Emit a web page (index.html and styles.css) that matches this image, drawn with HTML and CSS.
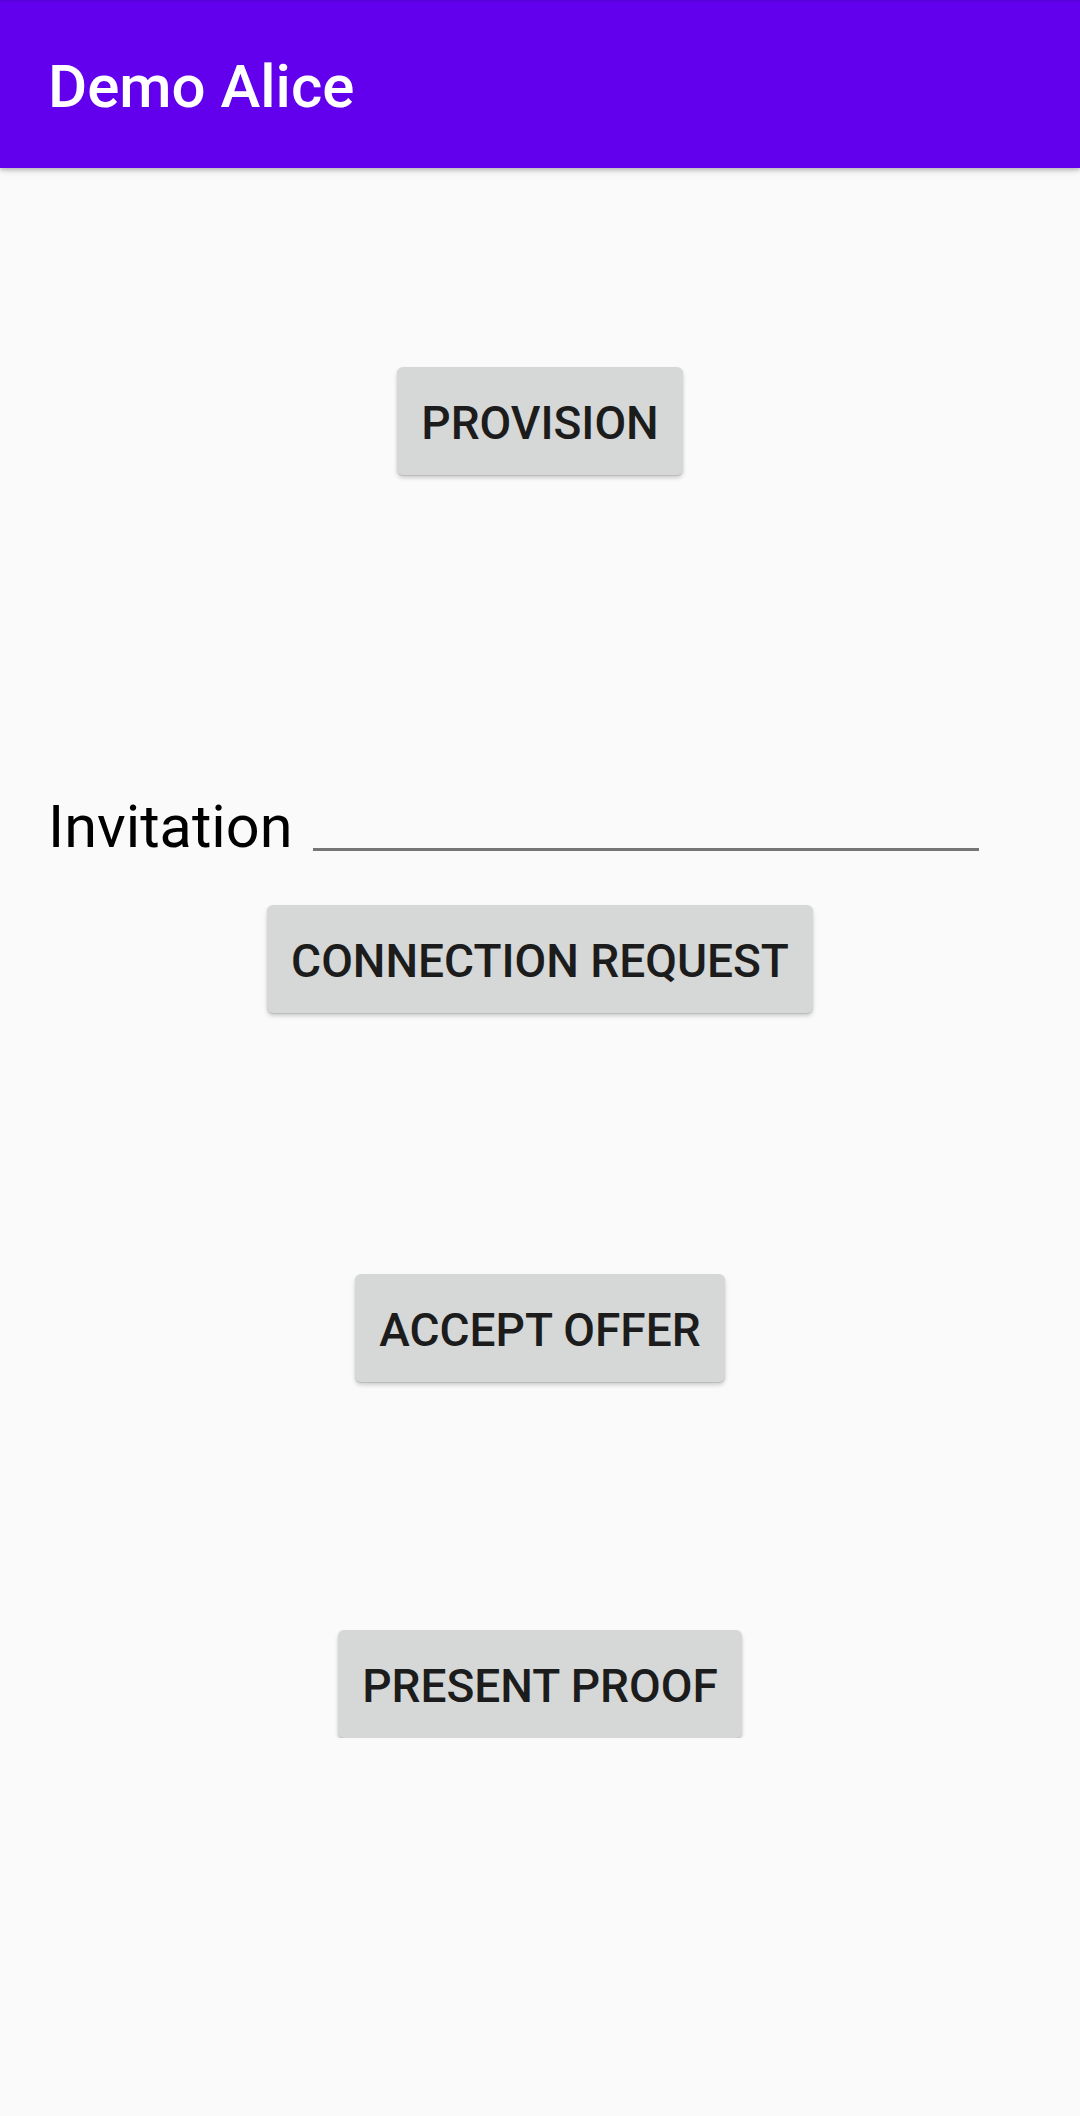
FILE: index.html
```html
<!DOCTYPE html>
<html>
<head>
<meta charset="utf-8">
<link rel="stylesheet" href="styles.css">
</head>
<body>
<header class="appbar"><span class="title">Demo Alice</span></header>
<main class="content">
  <button class="btn btn-provision">PROVISION</button>
  <div class="invite-row">
    <span class="invite-label">Invitation</span>
    <span class="invite-input"></span>
  </div>
  <button class="btn btn-connect">CONNECTION REQUEST</button>
  <button class="btn btn-accept">ACCEPT OFFER</button>
  <button class="btn btn-present">PRESENT PROOF</button>
</main>
</body>
</html>
```
FILE: styles.css
```css
html, body {
  margin: 0;
  padding: 0;
  background: #fafafa;
  font-family: Roboto, "Noto Sans", sans-serif;
}
.appbar {
  position: relative;
  z-index: 1;
  box-sizing: border-box;
  height: 168px;
  background: #6200ee;
  border-top: 2px solid #5a00dc;
  padding: 50px 0 0 48px;
  box-shadow: 0 2px 4px rgba(0,0,0,0.22), 0 4px 8px rgba(0,0,0,0.08);
}
.title {
  display: block;
  color: #ffffff;
  font-size: 60px;
  font-weight: 500;
  line-height: 70px;
}
.content {
  display: flex;
  flex-direction: column;
  align-items: center;
}
.btn {
  box-sizing: border-box;
  height: 108px;
  padding: 4px 24px 0;
  border: none;
  border-radius: 6px;
  background: #d6d7d7;
  color: #1c1c1c;
  font-family: Roboto, "Noto Sans", sans-serif;
  font-size: 46px;
  font-weight: 500;
  line-height: 104px;
  box-shadow: 0 3px 4px rgba(0,0,0,0.18), 0 1px 1px rgba(0,0,0,0.12);
}
.btn-provision { margin-top: 199px; }
.invite-row {
  align-self: stretch;
  display: flex;
  align-items: flex-start;
  padding-left: 48px;
  margin-top: 317px;
  height: 70px;
}
.invite-label {
  font-size: 59.4px;
  line-height: 70px;
  color: #000;
}
.invite-input {
  width: 666px;
  height: 3px;
  margin-top: 56px;
  margin-left: 21px;
  background: #757575;
}
.btn-connect { margin-top: 43px; }
.btn-accept { margin-top: 261px; }
.btn-present { margin-top: 248px; }
```
